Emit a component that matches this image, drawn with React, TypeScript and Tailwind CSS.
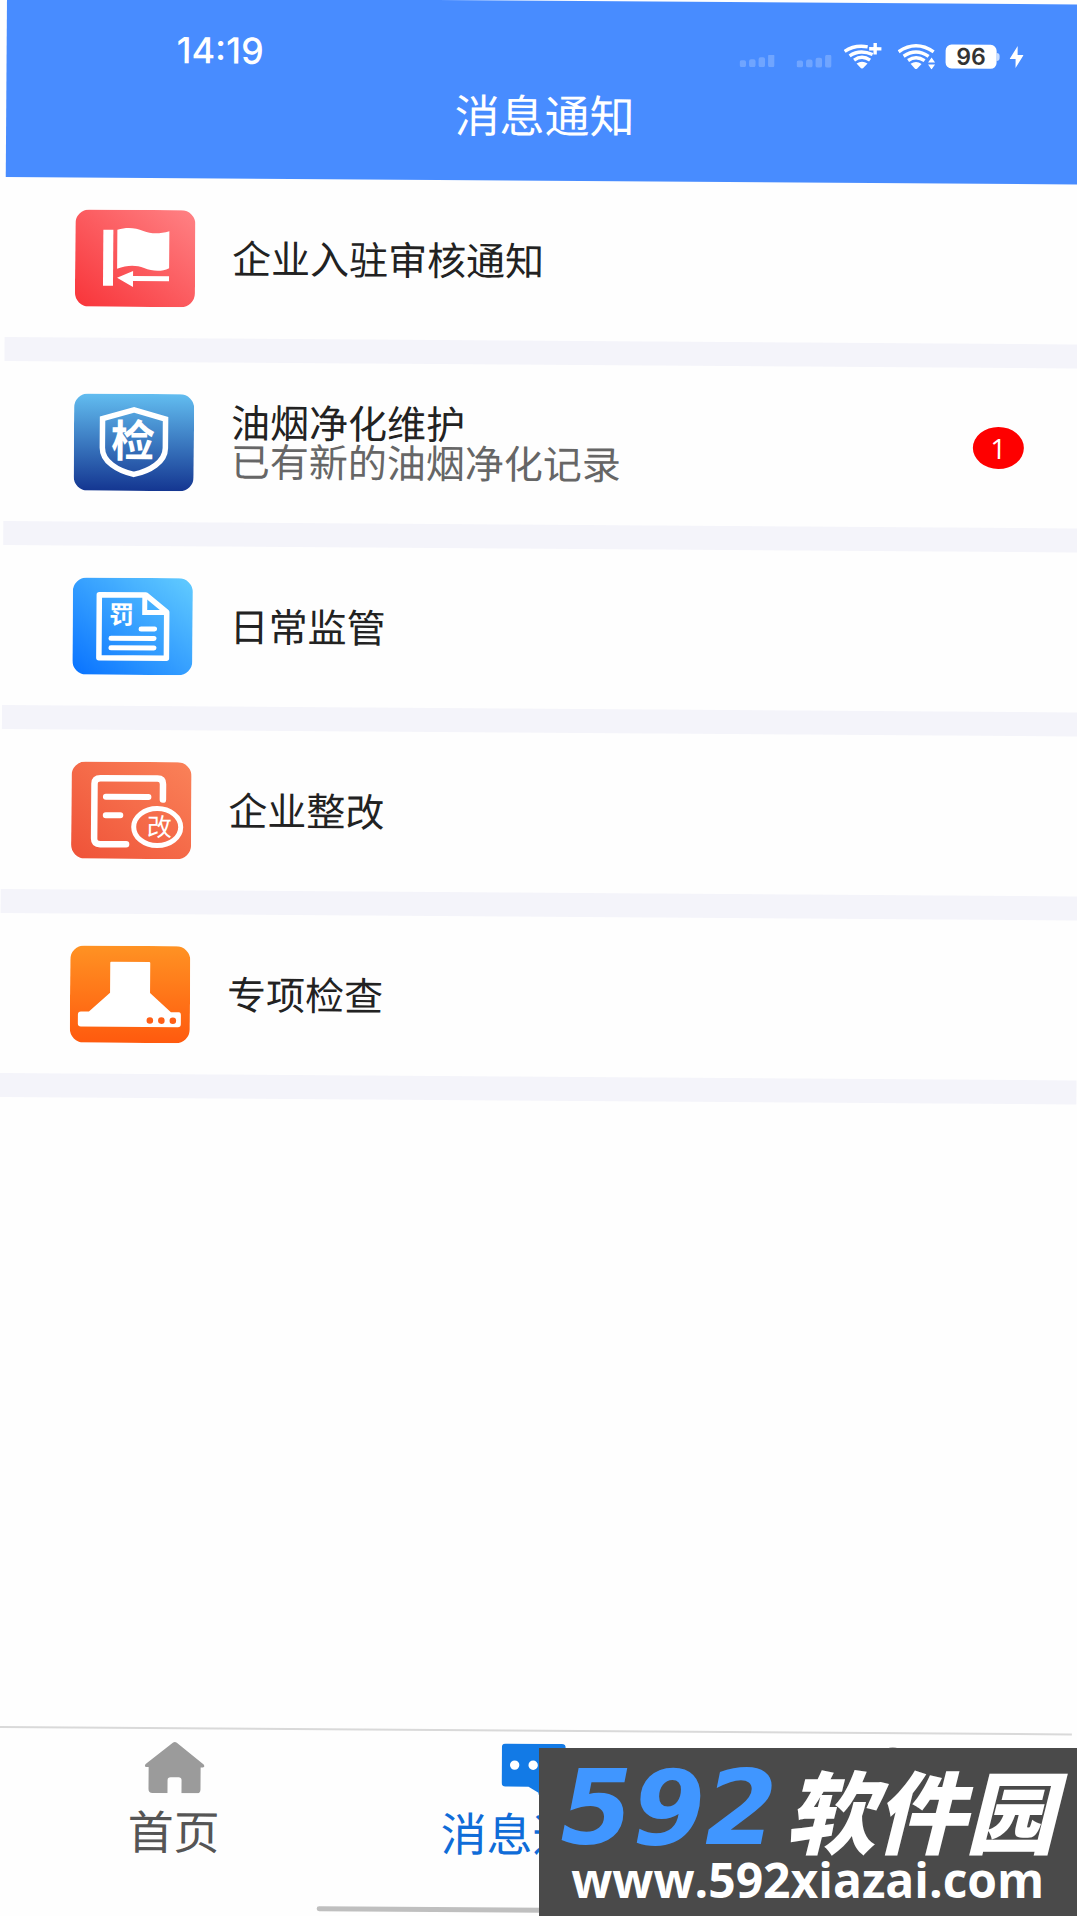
import { useState } from 'react';
import type { ReactNode } from 'react';

interface NoticeData {
  id: string;
  title: string;
  detail?: string;
  unread?: number;
  icon: ReactNode;
}

const iconText = 'font-["Noto_Sans_CJK_SC",sans-serif] font-bold';

function Tile({ id, from, to, slanted, children }: { id: string; from: string; to: string; slanted?: boolean; children: ReactNode }) {
  return (
    <svg viewBox="0 0 120 97" className="w-[120px] h-[97px] shrink-0" aria-hidden="true">
      <defs>
        <linearGradient id={id} x1={slanted ? 1 : 0} y1="0" x2="0" y2="1">
          <stop offset="0" stopColor={from} />
          <stop offset="1" stopColor={to} />
        </linearGradient>
      </defs>
      <rect width="120" height="97" rx="14" fill={`url(#${id})`} />
      {children}
    </svg>
  );
}

const FlagIcon = () => (
  <Tile id="tile-flag" from="#ff8285" to="#f83439" slanted>
    <path d="M28 20H38V76H28Z" fill="#fff" />
    <path d="M42 20C52 17 60 18 68 21S84 24 94 21V58C86 62 77 61 69 58S52 55 42 59Z" fill="#fff" />
    <path d="M42 68L58 61V66H94V71H58V77Z" fill="#fff" />
  </Tile>
);

const ShieldIcon = () => (
  <Tile id="tile-shield" from="#62bdf0" to="#143691">
    <path
      d="M60 16L91.500 25V54C91.500 68 76 77 60 80.500C44 77 28.500 68 28.500 54V25Z"
      fill="none"
      stroke="#fff"
      strokeWidth="5.500"
    />
    <text x="59" y="63" textAnchor="middle" fontSize="44" fill="#fff" className={iconText}>检</text>
  </Tile>
);

const DocumentIcon = () => (
  <Tile id="tile-document" from="#62ccff" to="#0872ff" slanted>
    <path d="M26.500 17H73L94 34V80H26.500Z" fill="none" stroke="#fff" strokeWidth="5.500" strokeLinejoin="round" />
    <path d="M72 18V34.500H93" fill="none" stroke="#fff" strokeWidth="5" />
    <text x="49" y="46" textAnchor="middle" fontSize="25" fill="#fff" className={iconText}>罚</text>
    <path d="M68.500 51H82M38.500 60.500H81.500M38.500 70H81.500" stroke="#fff" strokeWidth="5" strokeLinecap="round" />
  </Tile>
);

const RectifyIcon = () => (
  <Tile id="tile-rectify" from="#fa8259" to="#ef5238" slanted>
    <g fill="none" stroke="#fff" strokeLinecap="round">
      <path d="M55 82.500H29Q23 82.500 23 77V22Q23 16.500 29 16.500H86Q91.500 16.500 91.500 22V37.500" strokeWidth="6.500" />
      <path d="M34.500 35H77M34.500 53.500H49" strokeWidth="6" />
      <ellipse cx="86" cy="65" rx="23.500" ry="18.500" strokeWidth="5" />
    </g>
    <text x="88" y="74" textAnchor="middle" fontSize="25" fill="#fff" className="font-['Noto_Sans_CJK_SC',sans-serif]">改</text>
  </Tile>
);

const HoodIcon = () => (
  <Tile id="tile-hood" from="#ff9223" to="#ff5a0e">
    <path d="M41 16H79Q80 16 80 17V47L101 66H109Q111 66 111 69V78Q111 81 108 81H11Q8 81 8 78V69Q8 66 11 66H19L40 47V17Q40 16 41 16Z" fill="#fff" />
    <g fill="#ff5f16">
      <circle cx="80" cy="74.500" r="3.300" />
      <circle cx="91.500" cy="74.500" r="3.300" />
      <circle cx="103" cy="74.500" r="3.300" />
    </g>
  </Tile>
);

function SignalIcon() {
  return (
    <svg viewBox="0 0 35 13" className="w-[35px] h-[13px] mt-[10px]" fill="#fff" fillOpacity=".22" aria-hidden="true">
      <rect x="0" y="6" width="6.500" height="7" rx="2" />
      <rect x="9.500" y="5" width="6.500" height="8" rx="2" />
      <rect x="19" y="3" width="6.500" height="10" rx="2" />
      <rect x="28.500" y="0" width="6.500" height="13" rx="2" />
    </svg>
  );
}

function WifiIcon({ plus }: { plus?: boolean }) {
  return (
    <svg viewBox="0 0 38 26" className="w-[38px] h-[26px]" aria-hidden="true">
      <g fill="none" stroke="#fff" strokeWidth="3.400">
        <path d={plus ? 'M1 8.500Q11 1.500 24 3.800' : 'M1 8.500Q18.500 -3.500 36 8.500'} />
        <path d={plus ? 'M6 13Q16 6 29 11.500' : 'M6 13Q18.500 4.500 31 13'} />
        <path d={plus ? 'M10.500 17.200Q18.500 11.500 26.500 17.200' : 'M10.500 17.200Q18.500 11.500 27 17.200'} />
      </g>
      <path d="M13 20.500Q18.500 17 24 20.500L19.500 25.300Q18.500 26 17.500 25.300Z" fill="#fff" />
      {plus ? (
        <path d="M31.500 0V11.500M25.500 5.800H38" stroke="#fff" strokeWidth="3.400" />
      ) : (
        <path d="M34 14L37.500 19H30.500ZM34 26L37.500 21H30.500Z" fill="#fff" />
      )}
    </svg>
  );
}

function HomeIcon() {
  return (
    <svg viewBox="0 0 60 52" className="w-[60px] h-[52px]" fill="#9b9b9b" aria-hidden="true">
      <path d="M28 1.500Q30 0 32 1.500L59 23Q61 26 58 26H56V48Q56 52 52 52H37V39Q37 36 34 36H26Q23 36 23 39V52H8Q4 52 4 48V26H2Q-1 26 1 23Z" />
    </svg>
  );
}

function ChatIcon() {
  return (
    <svg viewBox="0 0 64 52" className="w-[64px] h-[52px]" aria-hidden="true">
      <path d="M4 0H60Q64 0 64 4V39Q64 43 60 43H47L37 51V49L27 43H4Q0 43 0 39V4Q0 0 4 0Z" fill="#127ae6" />
      <g fill="#fff">
        <circle cx="13" cy="21.500" r="4.700" />
        <circle cx="31.500" cy="21.500" r="4.700" />
        <circle cx="50" cy="21.500" r="4.700" />
      </g>
    </svg>
  );
}

function UserIcon() {
  return (
    <svg viewBox="0 0 60 52" className="w-[60px] h-[52px]" fill="#9b9b9b" aria-hidden="true">
      <circle cx="30" cy="14" r="13" />
      <path d="M5 52Q5 30 30 30T55 52Z" />
    </svg>
  );
}

const notices: NoticeData[] = [
  { id: 'join', title: '企业入驻审核通知', icon: <FlagIcon /> },
  { id: 'fume', title: '油烟净化维护', detail: '已有新的油烟净化记录', unread: 1, icon: <ShieldIcon /> },
  { id: 'daily', title: '日常监管', icon: <DocumentIcon /> },
  { id: 'rectify', title: '企业整改', icon: <RectifyIcon /> },
  { id: 'special', title: '专项检查', icon: <HoodIcon /> },
];

const tabs = [
  { id: 'home', label: '首页', icon: <HomeIcon /> },
  { id: 'message', label: '消息通知', icon: <ChatIcon /> },
  { id: 'mine', label: '我的', icon: <UserIcon /> },
];

export default function App() {
  const [activeTab, setActiveTab] = useState('message');

  return (
    <div className="relative min-h-screen overflow-hidden bg-[#fefefe] font-['Noto_Sans_CJK_SC',sans-serif]">
      <div className="flex flex-col min-h-screen -mt-[3px] ml-[7px] -mr-[7px] origin-top-left rotate-[0.4deg]">
        {/* Header */}
        <header className="bg-[#488cff] text-white pt-8 pb-[37px]">
          <div className="flex items-center justify-between h-10 pl-[170px] pr-[60px]">
            <span className="font-['Inter',sans-serif] font-medium text-[36px] leading-10">14:19</span>
            <div className="flex items-center mt-[2px]">
              <div className="flex gap-[22px] mr-3">
                <SignalIcon />
                <SignalIcon />
              </div>
              <div className="flex gap-4 mr-[10px]">
                <WifiIcon plus />
                <WifiIcon />
              </div>
              <div className="flex items-center mr-[10px]">
                <span className="w-[51px] h-6 rounded-md bg-white text-[#333] text-center font-['Inter',sans-serif] font-semibold text-[23px] leading-6">
                  96
                </span>
                <span className="w-[3px] h-2 rounded-r-sm bg-white/70" />
              </div>
              <svg viewBox="0 0 14 22" className="w-[14px] h-[22px]" fill="#fff" aria-hidden="true">
                <path d="M8 0L0 13H6V22L14 9H8Z" />
              </svg>
            </div>
          </div>
          <h1 className="mt-[11px] text-center text-[45px] leading-[60px]">消息通知</h1>
        </header>

        {/* Notice list */}
        <main className="flex-1">
          <ul>
            {notices.map((notice) => (
              <li key={notice.id} className="border-b-[24px] border-[#f4f4fa]">
                <a href={`#${notice.id}`} className="flex items-center h-40 pl-[70px] pr-[57px]">
                  {notice.icon}
                  <div className="flex-1 ml-[37px] pb-1 text-[39px] leading-[39px] text-[#222]">
                    <div>{notice.title}</div>
                    {notice.detail && <div className="text-[#666]">{notice.detail}</div>}
                  </div>
                  {notice.unread && (
                    <span className="w-[51px] h-[42px] rounded-[50%] bg-[#fe0000] text-white text-center font-['Open_Sans',sans-serif] text-[28px] leading-[42px]">
                      {notice.unread}
                    </span>
                  )}
                </a>
              </li>
            ))}
          </ul>
        </main>

        {/* Tab bar */}
        <nav className="border-t-2 border-[#d9d9d9] pt-3 pb-1">
          <div className="grid grid-cols-3">
            {tabs.map((tab) => (
              <button
                key={tab.id}
                type="button"
                onClick={() => setActiveTab(tab.id)}
                className={`flex flex-col items-center gap-3 text-[46px] leading-[48px] ${activeTab === tab.id ? 'text-[#0f6cd8]' : 'text-[#555]'}`}
              >
                {tab.icon}
                <span>{tab.label}</span>
              </button>
            ))}
          </div>
          <div className="w-2/5 h-[5px] mx-auto mt-[52px] rounded-full bg-[#bfbfbf]" />
        </nav>
      </div>

      {/* Site banner */}
      <a
        href="#site"
        className="absolute right-0 bottom-0 w-1/2 h-[168px] pt-3 flex flex-col items-center justify-center bg-[#4a4a4a] text-white whitespace-nowrap"
      >
        <span className="flex items-center gap-2 h-[84px] italic font-black text-[90px] leading-[84px]">
          <span className="font-['DejaVu_Sans',sans-serif] font-bold text-[104px] text-[#4096ff]">592</span>
          <span>软件园</span>
        </span>
        <span className="font-['Open_Sans',sans-serif] font-bold text-[48px] leading-[60px]">www.592xiazai.com</span>
      </a>
    </div>
  );
}
